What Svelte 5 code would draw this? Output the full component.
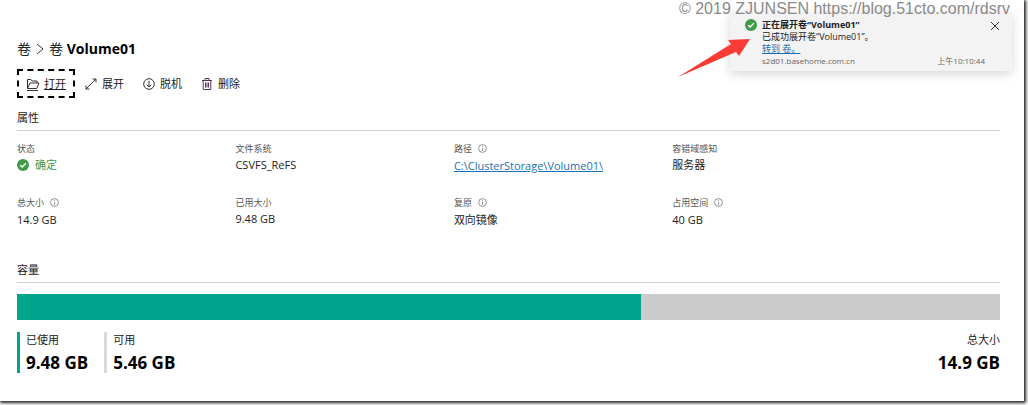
<script lang="ts">
	interface Property {
		label: string;
		value: string;
		info?: boolean;
		kind?: "status" | "link";
	}

	const properties: Property[] = [
		{ label: "状态", value: "确定", kind: "status" },
		{ label: "文件系统", value: "CSVFS_ReFS" },
		{ label: "路径", value: "C:\\ClusterStorage\\Volume01\\", info: true, kind: "link" },
		{ label: "容错域感知", value: "服务器" },
		{ label: "总大小", value: "14.9 GB", info: true },
		{ label: "已用大小", value: "9.48 GB" },
		{ label: "复原", value: "双向镜像", info: true },
		{ label: "占用空间", value: "40 GB", info: true },
	];

	const used = 9.48;
	const free = 5.46;
	const usedPercent = (used / (used + free)) * 100;

	let showNotice = $state(true);
</script>

{#snippet check()}
	<svg class="check" viewBox="0 0 12 12" aria-hidden="true">
		<circle cx="6" cy="6" r="6" fill="#429a4b" />
		<path d="M3.2 6.2 5.2 8.1 8.9 4.2" fill="none" stroke="#fff" stroke-width="1.4" />
	</svg>
{/snippet}

<div class="page">
	<main class="panel">
		<h1 class="title">
			<a href="#volumes">卷</a>
			<svg class="chevron" viewBox="0 0 8 12" aria-hidden="true">
				<path d="M1 1 7 6 1 11" />
			</svg>
			<span>卷 <strong>Volume01</strong></span>
		</h1>

		<div class="toolbar">
			<button class="tool tool-active">
				<svg viewBox="0 0 14 14" aria-hidden="true">
					<path d="M1.5 11.5V2.5H5L6.2 4H11V6M1.5 11.5 4 6H13L10.8 11.5ZM1 13.5H12" />
				</svg>
				<span>打开</span>
			</button>
			<button class="tool">
				<svg viewBox="0 0 14 14" aria-hidden="true">
					<path d="M2 12 12 2M8.5 2H12V5.5M2 8.5V12H5.5" />
				</svg>
				<span>展开</span>
			</button>
			<button class="tool">
				<svg viewBox="0 0 14 14" aria-hidden="true">
					<circle cx="7" cy="7" r="5.3" />
					<path d="M7 3.8V10M4.8 7.8 7 10 9.2 7.8" />
				</svg>
				<span>脱机</span>
			</button>
			<button class="tool tool-delete">
				<svg viewBox="0 0 14 14" aria-hidden="true">
					<path d="M2 3.5H12M5 3.5V1.5H9V3.5M3.2 3.5V12.5H10.8V3.5M5.5 5.5V10.5M7 5.5V10.5M8.5 5.5V10.5" />
				</svg>
				<span>删除</span>
			</button>
		</div>

		<h2 class="heading">属性</h2>
		<dl class="properties">
			{#each properties as item}
				<div class="property">
					<dt class:with-info={item.info}>
						{item.label}
						{#if item.info}
							<svg class="info" viewBox="0 0 9 9" aria-hidden="true">
								<circle cx="4.5" cy="4.5" r="3.9" />
								<path d="M4.5 4V6.8M4.5 2.2V3.1" />
							</svg>
						{/if}
					</dt>
					{#if item.kind === "status"}
						<dd class="status">{@render check()}{item.value}</dd>
					{:else if item.kind === "link"}
						<dd><a class="link" href="#path">{item.value}</a></dd>
					{:else}
						<dd>{item.value}</dd>
					{/if}
				</div>
			{/each}
		</dl>

		<h2 class="heading">容量</h2>
		<div class="bar">
			<div class="bar-used" style="width: {usedPercent}%"></div>
		</div>
		<div class="legend">
			<div class="amount amount-used">
				<span>已使用</span>
				<strong>{used} GB</strong>
			</div>
			<div class="amount amount-free">
				<span>可用</span>
				<strong>{free} GB</strong>
			</div>
			<div class="amount amount-total">
				<span>总大小</span>
				<strong>14.9 GB</strong>
			</div>
		</div>
	</main>

	{#if showNotice}
		<aside class="notice">
			{@render check()}
			<div class="notice-body">
				<strong>正在展开卷“Volume01”</strong>
				<span>已成功展开卷“Volume01”。</span>
				<a class="link" href="#volume">转到 卷。</a>
				<div class="notice-foot">
					<span>s2d01.basehome.com.cn</span>
					<time>上午10:10:44</time>
				</div>
			</div>
			<button class="close" aria-label="关闭" onclick={() => (showNotice = false)}>
				<svg viewBox="0 0 10 10" aria-hidden="true"><path d="M1 1 9 9M9 1 1 9" /></svg>
			</button>
		</aside>
	{/if}

	<svg class="arrow" viewBox="0 0 74 40" aria-hidden="true">
		<path d="M0 39 53 6 50 2 72 1 61 18 58 14Z" fill="#fb3b35" />
	</svg>
	<div class="watermark">© 2019 ZJUNSEN https://blog.51cto.com/rdsrv</div>
</div>

<style>
	:global(body) {
		margin: 0;
		background: #fff;
	}

	.page {
		position: relative;
		padding: 0 4px 4px 0;
		overflow: hidden;
		font-family: "Open Sans", "Noto Sans CJK SC", sans-serif;
		font-size: 11px;
		line-height: 16px;
		color: #222;
	}

	.panel {
		padding: 39px 24px 28px 17px;
		background: #fff;
		box-shadow: 1px 1px 3px 1px #222;
	}

	.title {
		display: flex;
		align-items: center;
		gap: 5px;
		margin: 0 0 10px;
		font-size: 14px;
		font-weight: 400;
		line-height: 20px;
	}

	.title strong {
		color: #000;
	}

	.title a {
		color: inherit;
		text-decoration: none;
	}

	svg {
		fill: none;
		stroke: #333;
		flex: none;
	}

	.chevron {
		width: 8px;
		height: 12px;
	}

	.check {
		width: 12px;
		height: 12px;
		stroke: none;
	}

	.toolbar {
		display: flex;
		height: 29px;
	}

	.tool {
		display: flex;
		align-items: center;
		gap: 4px;
		padding: 0 9px;
		border: 0;
		background: transparent;
		font: inherit;
		color: inherit;
		cursor: pointer;
	}

	.tool svg {
		width: 14px;
		height: 14px;
	}

	.tool-active {
		padding: 0 7px;
		border: 2px dashed #000;
		text-decoration: underline;
	}

	.tool-delete svg {
		stroke: #5b3260;
	}

	.heading {
		margin: 12px 0 10px;
		padding-bottom: 4px;
		border-bottom: 1px solid #d2d2d2;
		font-size: 11px;
		font-weight: 400;
		line-height: 16px;
	}

	.properties {
		display: grid;
		grid-template-columns: 2fr 2fr 2fr 3fr;
		row-gap: 21px;
		margin: 0 0 34px;
	}

	dt {
		display: flex;
		align-items: center;
		gap: 6px;
		height: 15px;
		padding-bottom: 1px;
		font-size: 9px;
		color: #555;
	}

	.with-info {
		padding-bottom: 2px;
	}

	.info {
		width: 9px;
		height: 9px;
		stroke: #777;
		stroke-width: 0.8;
	}

	dd {
		margin: 0;
	}

	.status {
		display: flex;
		align-items: center;
		gap: 6px;
		color: #429a4b;
	}

	.link {
		color: #1a70b8;
		text-decoration: underline;
	}

	.bar {
		height: 26px;
		margin: 11px 0 12px;
		background: #ccc;
	}

	.bar-used {
		height: 100%;
		background: #00a58e;
	}

	.legend {
		display: flex;
		gap: 16px;
	}

	.amount {
		display: flex;
		flex-direction: column;
		gap: 5px;
		padding-left: 6px;
		border-left: 3px solid transparent;
	}

	.amount strong {
		font-size: 17px;
		line-height: 20px;
		color: #000;
	}

	.amount-used {
		border-color: #00a58e;
	}

	.amount-free {
		border-color: #d9d9d9;
	}

	.amount-total {
		margin-left: auto;
		text-align: right;
	}

	.notice {
		position: absolute;
		top: 12px;
		right: 16px;
		display: flex;
		gap: 5px;
		box-sizing: border-box;
		width: 282px;
		padding: 7px 12px 4px 15px;
		background: #f3f3f3;
		box-shadow: 0 3px 10px rgba(0, 0, 0, 0.16);
	}

	.notice-body {
		display: flex;
		flex: 1;
		flex-direction: column;
		align-items: flex-start;
		font-size: 9px;
		line-height: 12px;
	}

	.notice-foot {
		display: flex;
		justify-content: space-between;
		width: 100%;
		color: #666;
		font-size: 8px;
	}

	.close {
		align-self: flex-start;
		width: 10px;
		height: 14px;
		padding: 0;
		border: 0;
		background: transparent;
		cursor: pointer;
	}

	.close svg {
		width: 10px;
		height: 10px;
	}

	.arrow {
		position: absolute;
		top: 38px;
		right: 276px;
		width: 74px;
		height: 40px;
		stroke: none;
	}

	.watermark {
		position: absolute;
		top: 0;
		right: 18px;
		font-family: "Liberation Sans", Arial, sans-serif;
		font-size: 16px;
		line-height: 18px;
		color: #8a8a8a;
	}
</style>
